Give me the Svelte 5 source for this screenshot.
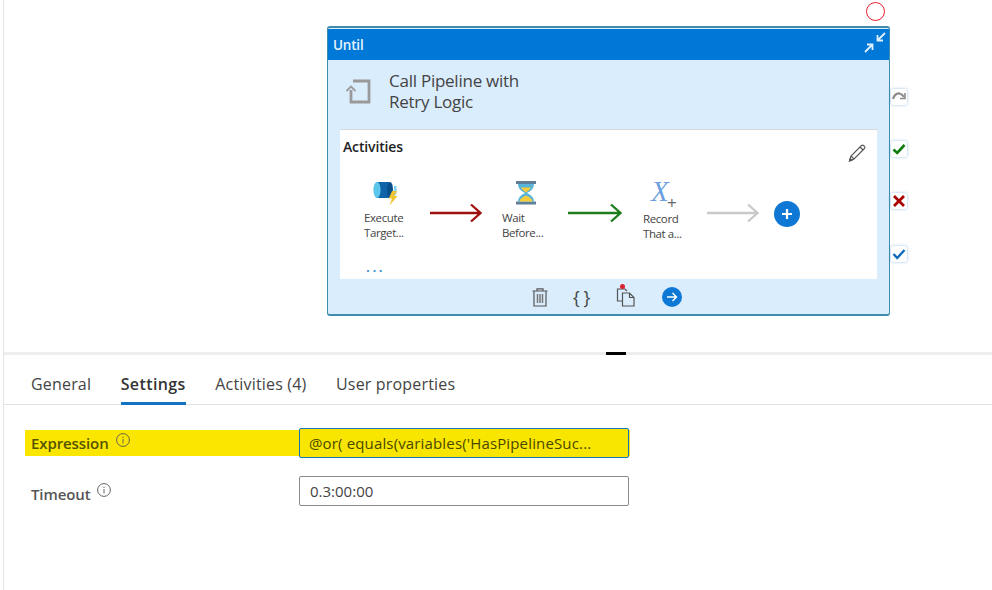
<script>
  const tabs = [
    { label: 'General', active: false },
    { label: 'Settings', active: true },
    { label: 'Activities (4)', active: false },
    { label: 'User properties', active: false }
  ];
</script>

<div class="page">
  <section class="canvas">
    <div class="ring"></div>

    <div class="node">
      <header class="node-head">
        <span>Until</span>
        <svg class="collapse" width="24" height="22" viewBox="0 0 24 22" fill="none" stroke="#dff0ff" stroke-width="1.8">
          <path d="M22 1 L14.5 8.5 M14.5 3 V8.5 H20" />
          <path d="M2 20 L9.5 12.5 M4 12.5 H9.5 V18" />
        </svg>
      </header>

      <div class="node-title">
        <svg width="28" height="28" viewBox="0 0 28 28" fill="none" stroke="#9a9a9a" stroke-width="2.8">
          <path d="M9 4 H25 V25 H7 V13" />
          <path d="M2.5 14 L7 9.5 L11.5 14" stroke-width="1.8" />
        </svg>
        <div class="title-text">Call Pipeline with<br />Retry Logic</div>
      </div>

      <div class="activities">
        <div class="act-head">
          <span>Activities</span>
          <svg width="20" height="20" viewBox="0 0 20 20" fill="none" stroke="#555" stroke-width="1.1">
            <path d="M2.5 18 L4 13 L14.5 2.5 Q15.5 1.7 16.5 2.5 L17.7 3.7 Q18.4 4.7 17.5 5.5 L7 16 Z" />
            <path d="M4 13 L7 16 M13 4 L16.2 7" />
            <path d="M2.5 18 L3.2 15.6 L4.9 17.3 Z" fill="#555" />
          </svg>
        </div>

        <div class="flow">
          <div class="act act1">
            <svg width="26" height="26" viewBox="0 0 26 26">
              <path d="M5 2 H17 V18 H5 Q2 10 5 2 Z" fill="#0f63a8" />
              <ellipse cx="5" cy="10" rx="3.6" ry="8" fill="#5cc6ea" />
              <ellipse cx="18" cy="10" rx="3" ry="8" fill="#0a4f8a" />
              <path d="M22 6 H24.5 V13 Q24 16 20 17 V14 Q22 13 22 11 Z" fill="#7dd3f0" />
              <path d="M20 11 H25 L22 16 H25.5 L17.5 25.5 L20 18.5 H16.8 Z" fill="#f4c430" />
            </svg>
            <div class="act-label">Execute<br />Target...</div>
          </div>
          <svg class="arrow" width="52" height="20" viewBox="0 0 52 20" fill="none" stroke="#a01010" stroke-width="2.3">
            <path d="M0 10 H50 M41 1.5 L50.5 10 L41 18.5" />
          </svg>
          <div class="act act2">
            <svg width="24" height="26" viewBox="0 0 24 26">
              <rect x="2" y="1" width="20" height="3" fill="#5f7f98" />
              <rect x="2" y="21.5" width="20" height="3" fill="#5f7f98" />
              <path d="M4 4 H20 Q20 10 13 13 Q20 16 20 21.5 H4 Q4 16 11 13 Q4 10 4 4 Z" fill="#59b4d9" />
              <path d="M7 7.5 H17 Q16 10 12 12.5 Q8 10 7 7.5 Z M5.5 21.5 Q6 18 12 15.5 Q18 18 18.5 21.5 Z" fill="#f6cb3c" />
            </svg>
            <div class="act-label">Wait<br />Before...</div>
          </div>
          <svg class="arrow" width="54" height="20" viewBox="0 0 54 20" fill="none" stroke="#1b7d1b" stroke-width="2.3">
            <path d="M0 10 H52 M43 1.5 L52.5 10 L43 18.5" />
          </svg>
          <div class="act act3">
            <div class="xplus">
              <span class="x">X</span>
              <span class="plus">+</span>
            </div>
            <div class="act-label">Record<br />That a...</div>
          </div>
          <svg class="arrow" width="52" height="20" viewBox="0 0 52 20" fill="none" stroke="#c9c9c9" stroke-width="2.3">
            <path d="M0 10 H50 M41 1.5 L50.5 10 L41 18.5" />
          </svg>
          <svg class="add" width="26" height="26" viewBox="0 0 26 26">
            <circle cx="13" cy="13" r="13" fill="#0f78d4" />
            <path d="M13 8 V18 M8 13 H18" stroke="#fff" stroke-width="2.2" />
          </svg>
        </div>

        <div class="dots">...</div>
      </div>

      <div class="tools">
        <svg width="20" height="20" viewBox="0 0 20 20" fill="none" stroke="#555" stroke-width="1.2">
          <path d="M2.5 4 H17.5 M7 4 V1.8 H13 V4" />
          <path d="M4 4 V19 H16 V4" />
          <path d="M7.5 7 V16 M10 7 V16 M12.5 7 V16" stroke-width="1.5" stroke="#777" />
        </svg>
        <span class="braces">{'{ }'}</span>
        <div class="copy">
          <svg width="20" height="22" viewBox="0 0 20 22" fill="none" stroke="#555" stroke-width="1.2">
            <path d="M6 16 H1.5 V4 H9 L11 6" />
            <path d="M6.5 8 H13.5 L18 12.5 V21 H6.5 Z M13.5 8 V12.5 H18" />
          </svg>
          <i></i>
        </div>
        <svg width="20" height="20" viewBox="0 0 20 20" fill="none">
          <circle cx="10" cy="10" r="10" fill="#0f78d4" />
          <path d="M5 10 H14.5 M10.5 6 L14.5 10 L10.5 14" stroke="#fff" stroke-width="1.4" />
        </svg>
      </div>
    </div>

    <div class="ports">
      <div class="port">
        <svg width="14" height="14" viewBox="0 0 14 14" fill="none" stroke="#8a8a8a" stroke-width="2.2">
          <path d="M1 9 Q3 3 7.5 3.5 Q10 4 12 7" />
          <path d="M13 3 V8.5 H8" stroke-width="1.6" />
        </svg>
      </div>
      <div class="port">
        <svg width="14" height="14" viewBox="0 0 14 14" fill="none" stroke="#107c10" stroke-width="2.6">
          <path d="M1.5 7.5 L5.2 11 L12.5 3" />
        </svg>
      </div>
      <div class="port">
        <svg width="14" height="14" viewBox="0 0 14 14" fill="none" stroke="#a80000" stroke-width="2.8">
          <path d="M2 2 L12 12 M12 2 L2 12" />
        </svg>
      </div>
      <div class="port last">
        <svg width="14" height="14" viewBox="0 0 14 14" fill="none" stroke="#0f6cbd" stroke-width="2.4">
          <path d="M1.5 7 L5.2 11 L12.5 3" />
        </svg>
      </div>
    </div>
  </section>

  <div class="splitter"><span></span></div>

  <section class="panel">
    <nav class="tabs">
      {#each tabs as tab}
        <div class="tab" class:active={tab.active}>{tab.label}</div>
      {/each}
    </nav>

    <div class="form">
      <div class="row highlight">
        <div class="label">
          <span>Expression</span>
          <svg class="info" width="14" height="14" viewBox="0 0 14 14" fill="none" stroke="#555" stroke-width="0.9">
            <circle cx="7" cy="7" r="6.4" />
            <path d="M7 6 V10.4 M7 3.6 V4.9" />
          </svg>
        </div>
        <div class="field focus">@or( equals(variables('HasPipelineSuc...</div>
      </div>
      <div class="row timeout">
        <div class="label">
          <span>Timeout</span>
          <svg class="info" width="14" height="14" viewBox="0 0 14 14" fill="none" stroke="#555" stroke-width="0.9">
            <circle cx="7" cy="7" r="6.4" />
            <path d="M7 6 V10.4 M7 3.6 V4.9" />
          </svg>
        </div>
        <div class="field">0.3:00:00</div>
      </div>
    </div>
  </section>
</div>

<style>
  :global(body) {
    margin: 0;
    background: #fff;
  }
  .page {
    width: 992px;
    height: 590px;
    box-sizing: border-box;
    display: flex;
    flex-direction: column;
    overflow: hidden;
    font-family: "Open Sans", "Noto Sans", sans-serif;
    color: #333;
    position: relative;
  }
  .page::before {
    content: "";
    position: absolute;
    left: 3px;
    top: 0;
    bottom: 0;
    width: 1px;
    background: #e4e4e4;
  }
  .canvas {
    position: relative;
    height: 352px;
    flex: none;
  }
  .ring {
    position: absolute;
    left: 866px;
    top: 2px;
    width: 17px;
    height: 17px;
    border: 1.5px solid #e81f2f;
    border-radius: 50%;
  }
  .node {
    position: absolute;
    left: 327px;
    top: 26px;
    width: 563px;
    height: 290px;
    box-sizing: border-box;
    display: flex;
    flex-direction: column;
    background: #daedfd;
    border: 1px solid #3f8dac;
    border-top-width: 2px;
    border-bottom-width: 2px;
    border-radius: 3px;
  }
  .node-head {
    height: 31px;
    margin-top: 1px;
    flex: none;
    box-sizing: border-box;
    background: #0078d7;
    color: #e8f4ff;
    font-size: 13.5px;
    font-weight: 600;
    letter-spacing: -0.2px;
    padding: 0 2px 0 5px;
    display: flex;
    align-items: center;
    justify-content: space-between;
  }
  .collapse {
    margin-top: -4px;
  }
  .node-title {
    flex: none;
    height: 69px;
    box-sizing: border-box;
    padding: 0 0 7px 16px;
    display: flex;
    align-items: center;
    gap: 17px;
    color: #444;
  }
  .title-text {
    font-size: 17px;
    line-height: 21px;
    letter-spacing: -0.25px;
  }
  .activities {
    flex: none;
    height: 150px;
    margin: 0 12px;
    box-sizing: border-box;
    background: #fff;
    border-top: 1px solid #d9d9d9;
    padding: 0 3px;
    position: relative;
  }
  .act-head {
    height: 27px;
    display: flex;
    align-items: flex-end;
    justify-content: space-between;
    font-size: 14px;
    font-weight: 600;
    letter-spacing: -0.15px;
    color: #222;
    padding-right: 7px;
    box-sizing: border-box;
    line-height: 20px;
  }
  .act-head svg {
    margin-bottom: -6px;
  }
  .flow {
    display: flex;
    align-items: flex-start;
    margin-top: 23px;
    padding-left: 21px;
  }
  .act {
    flex: none;
    display: flex;
    flex-direction: column;
  }
  .act1 { width: 66px; }
  .act2 { width: 66px; }
  .act3 { width: 64px; }
  .act1 svg { margin: 0 0 0 8px; display: block; }
  .act2 svg { margin: 0 0 0 12px; display: block; }
  .act-label {
    margin-top: 4px;
    font-size: 11.5px;
    line-height: 15px;
    letter-spacing: -0.4px;
    color: #444;
    white-space: nowrap;
  }
  .xplus {
    height: 26px;
    position: relative;
  }
  .x {
    position: absolute;
    left: 8px;
    top: -5px;
    font-family: "Liberation Serif", serif;
    font-style: italic;
    font-size: 29px;
    line-height: 32px;
    color: #6d9fe0;
  }
  .plus {
    position: absolute;
    left: 24px;
    top: 13px;
    font-size: 17px;
    line-height: 20px;
    color: #666;
  }
  .act3 .act-label { margin-top: 5px; }
  .arrow {
    flex: none;
    margin-top: 23px;
  }
  .act1 + .arrow { margin-right: 20px; }
  .act2 + .arrow { margin-right: 21px; }
  .act3 + .arrow { margin-right: 15px; }
  .add {
    flex: none;
    margin-top: 21px;
  }
  .dots {
    position: absolute;
    left: 26px;
    bottom: 7px;
    color: #2a88d0;
    font-size: 14px;
    line-height: 10px;
    letter-spacing: 2.6px;
    font-weight: 600;
  }
  .tools {
    flex: 1;
    display: flex;
    align-items: center;
    padding: 0 0 0 202px;
    position: relative;
  }
  .tools > svg:first-child { margin-right: 23px; }
  .braces {
    font-size: 18px;
    line-height: 20px;
    letter-spacing: -0.5px;
    color: #444;
    width: 25px;
    margin-right: 18px;
    white-space: nowrap;
  }
  .copy {
    position: relative;
    width: 20px;
    height: 22px;
    margin-right: 26px;
    margin-top: -2px;
  }
  .copy i {
    position: absolute;
    left: 4px;
    top: -1px;
    width: 5px;
    height: 5px;
    background: #d9252f;
    border-radius: 50%;
  }
  .ports {
    position: absolute;
    left: 891px;
    top: 89px;
    display: flex;
    flex-direction: column;
    gap: 36px;
  }
  .port {
    width: 16px;
    height: 16px;
    background: #fff;
    border-radius: 2px;
    box-shadow: 0 0 3px rgba(20, 110, 190, 0.45);
    display: flex;
    align-items: center;
    justify-content: center;
  }
  .port.last { margin-top: 1px; }
  .splitter {
    height: 3px;
    flex: none;
    background: #eeeeee;
    margin-left: 4px;
    position: relative;
  }
  .splitter span {
    position: absolute;
    left: 602px;
    top: 0;
    width: 20px;
    height: 3px;
    background: #000;
  }
  .panel {
    flex: 1;
    padding-left: 4px;
  }
  .tabs {
    display: flex;
    height: 50px;
    box-sizing: border-box;
    border-bottom: 1px solid #e1e1e1;
    padding-left: 27px;
    gap: 29.5px;
  }
  .tab {
    font-size: 16px;
    line-height: 20px;
    letter-spacing: 0.18px;
    color: #444;
    padding-top: 18px;
    height: 49px;
    box-sizing: border-box;
    margin-top: 1px;
    white-space: nowrap;
  }
  .tab.active {
    font-weight: 600;
    letter-spacing: 0.4px;
    color: #333;
    border-bottom: 3px solid #1272c4;
  }
  .form {
    padding: 25px 0 0 21px;
    display: flex;
    flex-direction: column;
    gap: 22px;
  }
  .row {
    display: flex;
    width: 605px;
    height: 26px;
    align-items: center;
  }
  .row.highlight {
    background: #fbe600;
  }
  .label {
    width: 274px;
    flex: none;
    box-sizing: border-box;
    padding-left: 6px;
    display: flex;
    align-items: flex-start;
    gap: 7px;
    font-size: 15px;
    font-weight: 600;
    color: #555;
    letter-spacing: -0.1px;
  }
  .highlight .label { color: #555200; }
  .timeout .label { margin-top: 5px; gap: 6px; }
  .info { margin-top: 0; }
  .timeout .info { margin-top: -1px; }
  .field {
    flex: none;
    width: 330px;
    height: 30px;
    box-sizing: border-box;
    border: 1px solid #8a8a8a;
    border-radius: 2px;
    font-size: 15px;
    line-height: 28px;
    padding-left: 10px;
    color: #444;
    white-space: nowrap;
    overflow: hidden;
  }
  .field.focus {
    border-color: #1a74bd;
    background: #f8e600;
    padding-left: 9px;
    color: #4a4700;
    letter-spacing: 0.15px;
  }
</style>
